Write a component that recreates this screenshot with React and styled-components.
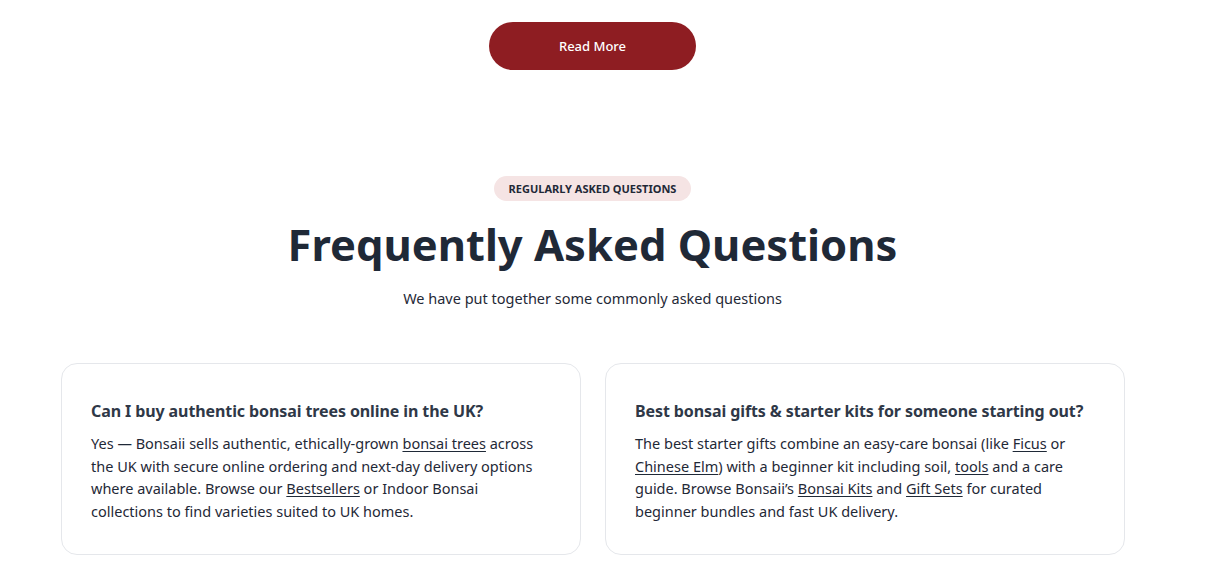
import styled, { createGlobalStyle } from 'styled-components';

const GlobalStyle = createGlobalStyle`
  body {
    margin: 0;
    background: #ffffff;
    font-family: 'Noto Sans', 'Open Sans', sans-serif;
    color: #1f2937;
  }
`;

const faqs = [
  {
    q: 'Can I buy authentic bonsai trees online in the UK?',
    a: [
      'Yes — Bonsaii sells authentic, ethically-grown ',
      { link: 'bonsai trees' },
      ' across the UK with secure online ordering and next-day delivery options where available. Browse our ',
      { link: 'Bestsellers' },
      ' or Indoor Bonsai collections to find varieties suited to UK homes.',
    ],
  },
  {
    q: 'Best bonsai gifts & starter kits for someone starting out?',
    a: [
      'The best starter gifts combine an easy-care bonsai (like ',
      { link: 'Ficus' },
      ' or ',
      { link: 'Chinese Elm' },
      ') with a beginner kit including soil, ',
      { link: 'tools' },
      ' and a care guide. Browse Bonsaii’s ',
      { link: 'Bonsai Kits' },
      ' and ',
      { link: 'Gift Sets' },
      ' for curated beginner bundles and fast UK delivery.',
    ],
  },
];

const App = () => {
  return (
    <Page>
      <GlobalStyle />
      <ButtonRow>
        <ReadMore>Read More</ReadMore>
      </ButtonRow>
      <Header>
        <Badge>Regularly Asked Questions</Badge>
        <Title>Frequently Asked Questions</Title>
        <Subtitle>We have put together some commonly asked questions</Subtitle>
      </Header>
      <Grid>
        {faqs.map((f) => (
          <Card key={f.q}>
            <Question>{f.q}</Question>
            <Answer>
              {f.a.map((part, i) =>
                typeof part === 'string' ? part : <Link key={i} href="#">{part.link}</Link>
              )}
            </Answer>
          </Card>
        ))}
      </Grid>
    </Page>
  );
};
export default App;

const Page = styled.div`
  width: 1185px;
  padding-top: 22px;
`;

const ButtonRow = styled.div`
  display: flex;
  justify-content: center;
`;

const ReadMore = styled.button`
  width: 207px;
  height: 48px;
  border: none;
  border-radius: 24px;
  background-color: #8e1d22;
  color: #ffffff;
  font-family: inherit;
  font-size: 13px;
  font-weight: 500;
  cursor: pointer;
`;

const Header = styled.header`
  display: flex;
  flex-direction: column;
  align-items: center;
  margin-top: 106px;
`;

const Badge = styled.span`
  display: inline-block;
  padding: 5px 15px;
  border-radius: 13px;
  background-color: #f5e4e4;
  color: #1f2937;
  font-size: 11px;
  font-weight: 700;
  line-height: 15px;
  text-transform: uppercase;
`;

const Title = styled.h1`
  margin: 15px 0 0;
  font-size: 43.5px;
  font-weight: 700;
  line-height: 56px;
  color: #1f2937;
`;

const Subtitle = styled.p`
  margin: 15px 0 0;
  font-size: 14.5px;
  line-height: 22px;
  color: #1f2937;
`;

const Grid = styled.section`
  display: grid;
  grid-template-columns: 520px 520px;
  gap: 24px;
  padding: 0 60px 0 61px;
  margin-top: 54px;
`;

const Card = styled.article`
  border: 1px solid #e5e7eb;
  border-radius: 16px;
  padding: 35px 29px 32px;
  background-color: #ffffff;
`;

const Question = styled.h3`
  margin: 0 0 9px;
  font-size: 16px;
  font-weight: 700;
  letter-spacing: -0.1px;
  line-height: 24px;
  color: #2f3847;
  white-space: nowrap;
`;

const Answer = styled.p`
  margin: 0;
  font-size: 14.5px;
  line-height: 22.5px;
  color: #1f2937;
`;

const Link = styled.a`
  color: inherit;
  text-decoration: underline;
  text-underline-offset: 2px;
`;
